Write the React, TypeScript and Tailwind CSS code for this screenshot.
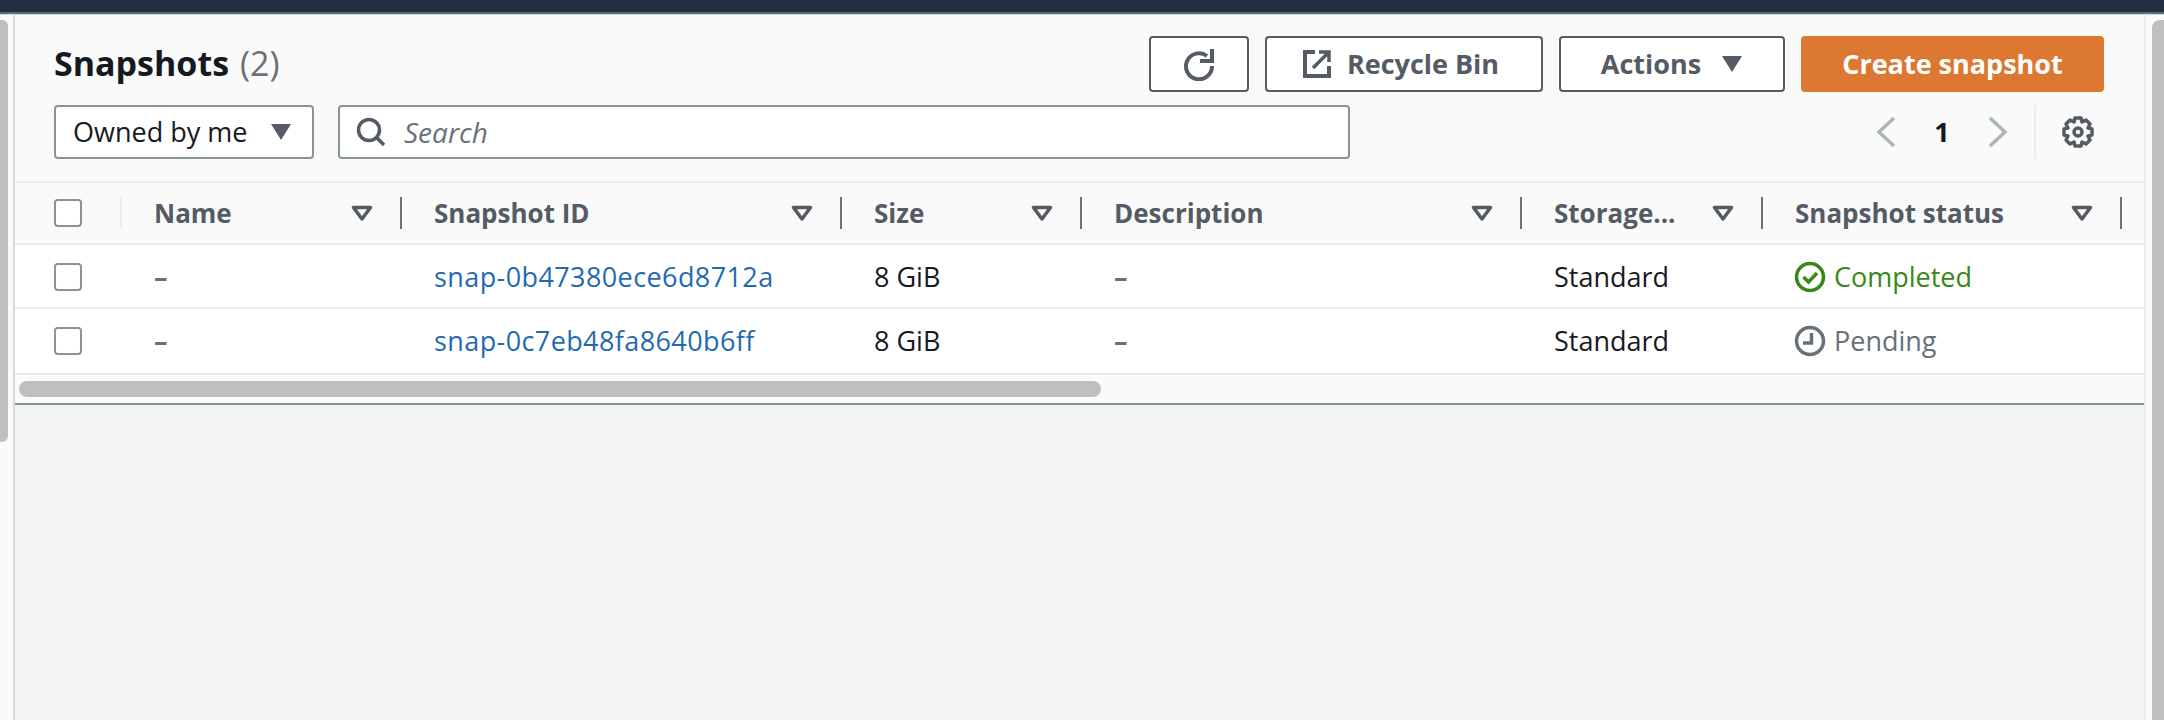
const font = "font-['Open_Sans',sans-serif]";

function FilterIcon() {
  return (
    <svg viewBox="0 0 22 16" className="h-[16px] w-[22px] shrink-0">
      <path d="M2.5 2.5h17L11 14z" fill="none" stroke="#545b64" strokeWidth="3.5" strokeLinejoin="round" />
    </svg>
  );
}

function CaretDown() {
  return (
    <svg viewBox="0 0 22 18" className="h-[18px] w-[22px] shrink-0">
      <path d="M1 1h20L11 17z" fill="#545b64" />
    </svg>
  );
}

function Checkbox() {
  return <div className="h-[28px] w-[28px] rounded-[4px] border-2 border-[#879596] bg-white" />;
}

function HeaderCell({ label }: { label: string }) {
  return (
    <div className="flex h-[32px] items-center border-r-2 border-[#687078] pl-[32px] pr-[27px]">
      <span className="flex-1 text-[26px] font-bold text-[#545b64]">{label}</span>
      <FilterIcon />
    </div>
  );
}

function Row({ id, status }: { id: string; status: 'done' | 'pending' }) {
  return (
    <div
      className={`grid grid-cols-[107px_280px_440px_240px_440px_241px_359px_1fr] items-center border-b-2 border-[#eaeded] bg-white pt-[2px] text-[27px] text-[#16191f] ${
        status === 'pending' ? 'h-[66px] pb-[2px]' : 'h-[64px]'
      }`}
    >
      <div className="pl-[39px]">
        <Checkbox />
      </div>
      <div className="pl-[32px] font-bold text-[#687078]">–</div>
      <a className="pl-[32px] tracking-[0.4px] text-[#1f6ab1]">{id}</a>
      <div className="pl-[32px]">8 GiB</div>
      <div className="pl-[32px] font-bold text-[#687078]">–</div>
      <div className="pl-[32px]">Standard</div>
      <div className="flex items-center gap-[8px] pl-[31px]">
        {status === 'done' ? (
          <>
            <svg viewBox="0 0 32 32" className="h-[32px] w-[32px]">
              <circle cx="16" cy="16" r="13.5" fill="none" stroke="#3b8618" strokeWidth="3.5" />
              <path d="M9.5 16l5 5 8.5-9" fill="none" stroke="#3b8618" strokeWidth="3.5" />
            </svg>
            <span className="text-[#3b8618]">Completed</span>
          </>
        ) : (
          <>
            <svg viewBox="0 0 32 32" className="h-[32px] w-[32px]">
              <circle cx="16" cy="16" r="13.5" fill="none" stroke="#687078" strokeWidth="3.5" />
              <path d="M17.5 8v10H9" fill="none" stroke="#687078" strokeWidth="3.5" />
            </svg>
            <span className="text-[#687078]">Pending</span>
          </>
        )}
      </div>
      <div />
    </div>
  );
}

export default function App() {
  return (
    <div className={`${font} flex h-[720px] flex-col overflow-hidden bg-[#f2f3f3]`}>
      <div className="h-[12px] shrink-0 bg-[#232f3e]" />
      <div className="h-[2px] shrink-0 bg-[#5f6b7a]" />
      <div className="h-[1px] shrink-0 bg-[#d5dbdb]" />
      <div className="flex flex-1">
        <div className="w-[13px] shrink-0 bg-[#fafafa] pt-[5px]">
          <div className="h-[422px] w-[8px] rounded-r-[6px] bg-[#bfbfbf]" />
        </div>
        <div className="w-[2133px] shrink-0 border-l-2 border-r-2 border-[#d5dbdb] border-r-[#eaeded]">
          <div className="border-b-2 border-[#879596] bg-[#fafafa]">
            <div className="h-[168px] border-b-2 border-[#eaeded] pl-[39px] pr-[40px] pt-[21px]">
              <div className="flex h-[56px] items-center justify-between">
                <h1 className="-mt-[2px] text-[34px] font-bold leading-[42px] text-[#16191f]">
                  Snapshots <span className="ml-[2px] font-normal text-[#687078]">(2)</span>
                </h1>
                <div className="flex gap-[16px] text-[27px] font-bold text-[#545b64]">
                  <div className="flex h-[56px] w-[100px] items-center justify-center rounded-[4px] border-2 border-[#545b64] bg-white pr-[2px]">
                    <svg viewBox="0 0 34 34" className="h-[34px] w-[34px]">
                      <path d="M26 9a13 13 0 1 0 5 10" fill="none" stroke="#545b64" strokeWidth="4" />
                      <path d="M31 2v12H19" fill="none" stroke="#545b64" strokeWidth="4" />
                    </svg>
                  </div>
                  <div className="flex h-[56px] w-[278px] items-center justify-center gap-[16px] rounded-[4px] border-2 border-[#545b64] bg-white pr-[6px]">
                    <svg viewBox="0 0 28 28" className="h-[28px] w-[28px]">
                      <path d="M12 2H2v24h24V16" fill="none" stroke="#545b64" strokeWidth="4" />
                      <path d="M16 2h10v10M26 2L10 18" fill="none" stroke="#545b64" strokeWidth="3.5" />
                    </svg>
                    Recycle Bin
                  </div>
                  <div className="flex h-[56px] w-[226px] items-center justify-center gap-[20px] rounded-[4px] border-2 border-[#545b64] bg-white">
                    Actions
                    <CaretDown />
                  </div>
                  <div className="flex h-[56px] w-[303px] items-center justify-center rounded-[4px] bg-[#dd7832] text-white">
                    Create snapshot
                  </div>
                </div>
              </div>
              <div className="mt-[13px] flex h-[54px] items-center justify-between">
                <div className="flex gap-[24px]">
                  <div className="flex h-[54px] w-[260px] items-center justify-between rounded-[4px] border-2 border-[#879596] bg-white pl-[17px] pr-[20px] text-[27px] text-[#16191f]">
                    Owned by me
                    <CaretDown />
                  </div>
                  <div className="flex h-[54px] w-[1012px] items-center gap-[18px] rounded-[4px] border-2 border-[#879596] bg-white pl-[16px] text-[28px] italic text-[#687078]">
                    <svg viewBox="0 0 30 30" className="h-[30px] w-[30px]">
                      <circle cx="13" cy="13" r="10.5" fill="none" stroke="#545b64" strokeWidth="3.5" />
                      <path d="M20 20l8 8" fill="none" stroke="#545b64" strokeWidth="3.5" />
                    </svg>
                    Search
                  </div>
                </div>
                <div className="flex items-center pr-[10px]">
                  <svg viewBox="0 0 20 32" className="h-[32px] w-[20px]">
                    <path d="M18 2L3 16l15 14" fill="none" stroke="#aab7b8" strokeWidth="3.5" />
                  </svg>
                  <span className="w-[92px] text-center text-[27px] font-bold text-[#16191f]">1</span>
                  <svg viewBox="0 0 20 32" className="h-[32px] w-[20px]">
                    <path d="M2 2l15 14L2 30" fill="none" stroke="#aab7b8" strokeWidth="3.5" />
                  </svg>
                  <div className="ml-[26px] h-[54px] border-l-2 border-[#eaeded]" />
                  <svg viewBox="0 0 32 32" className="ml-[26px] h-[32px] w-[32px]">
                    <circle cx="16" cy="16" r="4" fill="none" stroke="#545b64" strokeWidth="3.5" />
                    <path
                      d="M13 2h6l1 4 4-2 4 4-2 4 4 1v6l-4 1 2 4-4 4-4-2-1 4h-6l-1-4-4 2-4-4 2-4-4-1v-6l4-1-2-4 4-4 4 2z"
                      fill="none"
                      stroke="#545b64"
                      strokeWidth="3.5"
                      strokeLinejoin="round"
                    />
                  </svg>
                </div>
              </div>
            </div>
            <div className="grid h-[62px] grid-cols-[107px_280px_440px_240px_440px_241px_359px_1fr] items-center border-b-2 border-[#eaeded]">
              <div className="flex items-center justify-between">
                <div className="pl-[39px]">
                  <Checkbox />
                </div>
                <div className="h-[32px] border-r-2 border-[#eaeded]" />
              </div>
              <HeaderCell label="Name" />
              <HeaderCell label="Snapshot ID" />
              <HeaderCell label="Size" />
              <HeaderCell label="Description" />
              <HeaderCell label="Storage..." />
              <HeaderCell label="Snapshot status" />
              <div />
            </div>
            <Row id="snap-0b47380ece6d8712a" status="done" />
            <Row id="snap-0c7eb48fa8640b6ff" status="pending" />
            <div className="h-[28px] px-[4px] pt-[6px]">
              <div className="h-[16px] w-[1082px] rounded-[8px] bg-[#bfbfbf]" />
            </div>
          </div>
        </div>
        <div className="flex-1 bg-[#fafafa] pt-[5px]">
          <div className="ml-[6px] h-full rounded-tl-[8px] bg-[#bfbfbf]" />
        </div>
      </div>
    </div>
  );
}
